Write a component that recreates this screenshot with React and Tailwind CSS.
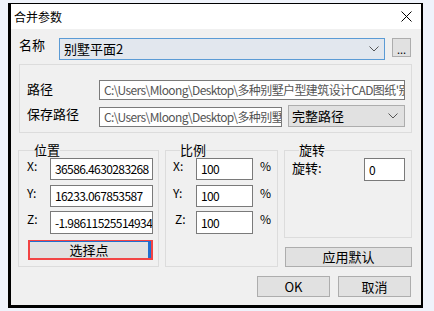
import React from 'react';

const font = { fontFamily: '"Noto Sans CJK SC", "Microsoft YaHei", sans-serif' };

const Chevron = () => (
  <svg width="10" height="6" viewBox="0 0 10 6" className="shrink-0">
    <path d="M0.5 0.5 L5 5 L9.5 0.5" fill="none" stroke="#555" strokeWidth="1" />
  </svg>
);

const TextBox = ({ value, className = '', muted }) => (
  <div
    className={`h-[22px] border border-[#7a7a7a] bg-white flex items-center pl-[4px] overflow-hidden whitespace-nowrap text-[12px] leading-[16px] tracking-[-0.6px] ${muted ? 'text-[#555]' : 'text-black'} ${className}`}
  >
    {value}
  </div>
);

const Button = ({ children, className = '' }) => (
  <div
    className={`h-[20px] border border-[#adadad] bg-[#e1e1e1] flex items-center justify-center text-[13px] leading-[16px] text-black ${className}`}
  >
    {children}
  </div>
);

const Group = ({ title, className = '', children }) => (
  <fieldset className={`border border-[#dcdcdc] m-0 p-0 min-w-0 ${className}`}>
    <legend className="ml-[7px] px-0 text-[13px] leading-[16px] text-black">{title}</legend>
    {children}
  </fieldset>
);

const AxisRow = ({ label, value, inputClass, labelClass = 'w-[23px]', suffix, className = '' }) => (
  <div className={`flex items-start ${className}`}>
    <span className={`text-[12px] leading-[16px] ${labelClass}`}>{label}</span>
    <TextBox value={value} className={inputClass} />
    {suffix && <span className="ml-[7px] text-[12px] leading-[16px]">{suffix}</span>}
  </div>
);

export default function App() {
  return (
    <div className="w-[434px] h-[311px] bg-[#eff3fb] pt-[3px] pl-[8px]" style={font}>
      <div className="w-[415px] h-[305px] border-black border-l-[3px] border-t border-r-2 border-b-[3px] flex flex-col">
        {/* title bar */}
        <div className="h-[25px] bg-white flex items-center justify-between pl-[3px] pr-[9px]">
          <span className="text-[12px] leading-[16px] text-black">合并参数</span>
          <svg width="11" height="11" viewBox="0 0 11 11">
            <path d="M0.5 0.5 L10.5 10.5 M10.5 0.5 L0.5 10.5" stroke="#000" strokeWidth="1" />
          </svg>
        </div>

        {/* body */}
        <div className="flex-1 bg-[#f0f0f0] pl-[7px] pr-[9px] text-black">
          {/* 名称 */}
          <div className="flex items-start mt-[9px]">
            <span className="w-[41px] pl-[1px] text-[13px] leading-[16px] -mt-[1px]">名称</span>
            <div className="w-[326px] h-[22px] border border-[#5b9bd5] bg-[#e2e7ee] flex items-center justify-between pl-[4px] pr-[5px]">
              <span className="text-[13px] leading-[16px]">别墅平面2</span>
              <Chevron />
            </div>
            <div className="ml-[7px] w-[19px] h-[19px] border border-[#adadad] bg-[#e1e1e1] flex items-end justify-center pb-[3px] text-[11px] leading-[8px]">
              ...
            </div>
          </div>

          {/* 路径 */}
          <div className="ml-px mt-[4px] w-[393px] h-[69px] border border-[#dcdcdc] pt-[15px] pl-[7px]">
            <div className="flex items-center">
              <span className="w-[72px] text-[13px] leading-[16px] -mt-[3px]">路径</span>
              <TextBox
                muted
                value="C:\Users\Mloong\Desktop\多种别墅户型建筑设计CAD图纸'别墅平面2.dwg"
                className="w-[306px] !h-[20px]"
              />
            </div>
            <div className="flex items-end mt-[5px]">
              <span className="w-[72px] text-[13px] leading-[16px] mb-[5px]">保存路径</span>
              <TextBox
                muted
                value="C:\Users\Mloong\Desktop\多种别墅户型建筑设计CAD图纸"
                className="w-[183px] !h-[20px]"
              />
              <div className="ml-[6px] w-[117px] h-[22px] border border-[#adadad] bg-[#e1e1e1] flex items-center justify-between pl-[3px] pr-[6px]">
                <span className="text-[13px] leading-[16px]">完整路径</span>
                <Chevron />
              </div>
            </div>
          </div>

          {/* groups */}
          <div className="flex items-stretch mt-[9px]">
            <Group title="位置" className="w-[141px] pl-[8px] pr-[5px] pb-[6px]">
              <AxisRow label="X:" value="36586.4630283268" inputClass="w-[103px]" />
              <AxisRow label="Y:" value="16233.067853587" inputClass="w-[103px]" className="mt-[5px]" />
              <AxisRow label="Z:" value="-1.98611525514934" inputClass="w-[103px] !h-[23px]" className="mt-[4px]" />
              <div className="mt-[6px] ml-[1px] w-[125px] h-[20px] border-2 border-[#f24444] bg-[#e1e1e1] flex">
                <div className="flex-1 border-t border-r-[3px] border-[#1f6fd0] flex items-center justify-center text-[13px] leading-[16px] -mt-px">
                  选择点
                </div>
              </div>
            </Group>

            <Group title="比例" className="ml-[6px] w-[113px] pl-[7px]">
              <AxisRow label="X:" value="100" inputClass="w-[57px]" suffix="%" />
              <AxisRow label="Y:" value="100" inputClass="w-[57px]" suffix="%" className="mt-[5px]" />
              <AxisRow label="Z:" value="100" inputClass="w-[57px] !h-[23px]" labelClass="w-[23px] pl-[2px]" suffix="%" className="mt-[4px]" />
            </Group>

            <div className="ml-[6px] w-[128px] flex flex-col">
              <Group title="旋转" className="flex-1 pl-[7px]">
                <div className="flex items-start">
                  <span className="w-[72px] text-[13px] leading-[16px] mt-[2px]">旋转:</span>
                  <TextBox value="0" className="w-[41px] !h-[23px]" />
                </div>
              </Group>
              <Button className="mt-[9px] ml-px w-[127px]">应用默认</Button>
            </div>
          </div>

          {/* footer */}
          <div className="flex justify-end mt-[9px] pr-px">
            <Button className="w-[73px] !h-[21px] text-[12px]">OK</Button>
            <Button className="ml-[8px] w-[73px] !h-[21px]">取消</Button>
          </div>
        </div>
      </div>
    </div>
  );
}
